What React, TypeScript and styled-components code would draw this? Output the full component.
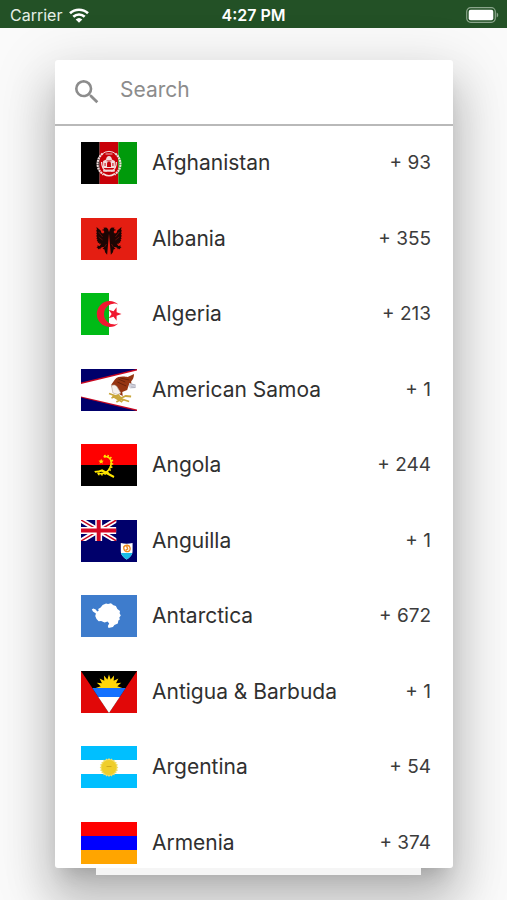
import React, { useState } from 'react';
import styled, { createGlobalStyle } from 'styled-components';
import { MdSearch } from 'react-icons/md';

const GlobalStyle = createGlobalStyle`
  *, *::before, *::after { box-sizing: border-box; }
  body {
    margin: 0;
    background: #fafafa;
    color: #303030;
    font-family: Inter, "Liberation Sans", sans-serif;
  }
`;

const Screen = styled.div`
  display: flex;
  flex-direction: column;
  height: 100vh;
  overflow: hidden;
`;

const StatusBar = styled.header`
  display: grid;
  grid-template-columns: 1fr auto 1fr;
  align-items: center;
  flex: none;
  height: 28px;
  padding: 2px 8px 0;
  background: #235126;
  color: #fff;
  font-size: 16px;
  line-height: 20px;
`;

const Carrier = styled.div`
  display: flex;
  align-items: center;
  gap: 7px;
  padding-left: 2px;
  color: #e6efe6;
`;

const Clock = styled.time`
  font-weight: 600;
`;

const BatteryIcon = styled.svg`
  justify-self: end;
`;

const Backdrop = styled.main`
  display: flex;
  flex: 1;
  flex-direction: column;
  min-height: 0;
  padding: 32px 54px 25px 55px;
`;

const Dialog = styled.section`
  display: flex;
  flex: 1;
  flex-direction: column;
  min-height: 0;
  overflow: hidden;
  border-radius: 3px;
  background: #fff;
  box-shadow:
    0 13px 18px -9px rgba(0, 0, 0, 0.16),
    0 34px 46px 4px rgba(0, 0, 0, 0.17),
    0 16px 56px 10px rgba(0, 0, 0, 0.13);
`;

const Sheet = styled.div`
  position: relative;
  flex: none;
  height: 7px;
  margin: 0 32px 0 41px;
  background: #f5f5f5;
`;

const SearchBar = styled.label`
  display: flex;
  align-items: center;
  flex: none;
  gap: 17px;
  height: 66px;
  padding: 0 16px;
  border-bottom: 2px solid #b9b9b9;
  color: #8c8c8c;
`;

const SearchInput = styled.input`
  flex: 1;
  min-width: 0;
  padding: 0 0 4px;
  border: 0;
  outline: 0;
  background: transparent;
  color: #303030;
  font: inherit;
  font-size: 21px;
  line-height: 26px;
  &::placeholder {
    color: #8c8c8c;
    opacity: 1;
  }
`;

const CountryList = styled.ul`
  display: grid;
  grid-auto-rows: 1fr;
  flex: none;
  height: 755px;
  margin: 0;
  padding: 0;
  list-style: none;
`;

const CountryButton = styled.button`
  display: flex;
  align-items: center;
  width: 100%;
  height: 100%;
  padding: 0 22px 1px 26px;
  border: 0;
  background: transparent;
  color: inherit;
  font: inherit;
  text-align: left;
  cursor: pointer;
`;

const Name = styled.span`
  flex: 1;
  margin-left: 15px;
  font-size: 21px;
  line-height: 26px;
`;

const DialCode = styled.span`
  color: #3c3c3c;
  font-size: 19px;
  line-height: 26px;
`;

const FlagFrame = styled.svg`
  flex: none;
  display: block;
`;

const star = (cx: number, cy: number, outer: number, inner: number, points: number, turn = -90) =>
  Array.from({ length: points * 2 }, (_, i) => {
    const r = i % 2 ? inner : outer;
    const a = ((turn + (i * 180) / points) * Math.PI) / 180;
    return `${(cx + r * Math.cos(a)).toFixed(2)},${(cy + r * Math.sin(a)).toFixed(2)}`;
  }).join(' ');

const Afghanistan = () => (
  <>
    <path d="M0 0h19v42H0z" fill="#000" />
    <path d="M19 0h19v42H19z" fill="#c80008" />
    <path d="M38 0h19v42H38z" fill="#009a0b" />
    <g fill="none" stroke="#f2dede">
      <path d="M22 11.500C15 17 15 28 23 32.500M35 11.500c7 5.500 7 16.500-1 21" strokeWidth="2.200" strokeDasharray="2 .6" />
      <path d="M21 12.500a10.500 10.500 0 0 1 15 0" strokeWidth="1" />
      <path d="M23 32c3.500 2.200 7.500 2.200 11 0" strokeWidth="1.600" />
      <path d="M21 20c0 5 2 8 5 9.500M36 20c0 5-2 8-5 9.500" strokeWidth="1.300" />
    </g>
    <path d="M22.500 26v-7l3-1.500c.2-2 1.300-3.500 3-3.500s2.800 1.500 3 3.500l3 1.500v7z" fill="#f2dede" />
    <path d="M26.500 25v-3.500a2 2 0 0 1 4 0V25zM24 21h1v3h-1zM32 21h1v3h-1zM26 18.500h5v.8h-5z" fill="#c80008" />
    <path d="M23 28h11v1.300H23zM25 12h7" fill="#f2dede" stroke="#f2dede" strokeWidth=".8" />
  </>
);

const eagleHalf =
  'M28.600 14.500 27.500 11l-1.800-1.500-3 .3 1 1.200-2.700 1 2.400.8.300 1.400-1.200 1.300-1.600-.5L20 12.500 15.800 9l.4 3-.8.500.9 2-.9.600.9 1.900-.9.700 1 1.800-.8.800 1.200 1.500-.8.900 1.500 1.200-.6 1 2-.1-.5 1.500 2.200-.8-1.600 2.600-2.400-.7.300 1.500-1.300.9 1.500.3.200 1.500 1.300-1 .8 1 .8-1.900 2.200-.8 1.200.6-1.700 1.200 2 .9.600 2.600 2.100 2.500z';

const Albania = () => (
  <>
    <path d="M0 0h57v42H0z" fill="#e41e12" />
    <g fill="#1c0503">
      <path d={eagleHalf} />
      <path d={eagleHalf} transform="matrix(-1 0 0 1 57 0)" />
    </g>
    <path d="m18 14 4 5m-4 0 4 3m17-8-4 5m4 0-4 3m-9 4-2 3m7-3 2 3" stroke="#8c120b" strokeWidth=".6" />
  </>
);

const Algeria = () => (
  <>
    <path d="M0 0h57v42H0z" fill="#fff" />
    <path d="M0 0h28.500v42H0z" fill="#00bb16" />
    <path d="M38 11.500A13 13 0 1 0 38 30.500 10.400 10.400 0 1 1 38 11.500z" fill="#f0182f" />
    <polygon points={star(34, 21, 7.2, 2.8, 5, 0)} fill="#f0182f" />
  </>
);

const AmericanSamoa = () => (
  <>
    <path d="M0 0h57v42H0z" fill="#00006b" />
    <path d="M57 0 0 13.500V28.500L57 42z" fill="#c80720" />
    <path d="M57 1.500 0 15v12.500L57 40.500z" fill="#fff" />
    <path d="M34.500 10.500c3-4 10.500-3 13-2.500l6.500-3c-.2 4-1.200 5.500-3 7.500l.5 3-3 1-1.500 4.500-5 2 .5 4-3-1.500-5-8-3 1-.6-3z" fill="#963512" />
    <path d="m38 10 7 3m-8 0 9 4m-6-8 9 2" stroke="#5e1c08" strokeWidth=".8" />
    <path d="M31 16.500c2-1 4.500-.5 5.500 1l4 6.500-3 1.500-5-1.500z" fill="#f6f1ed" stroke="#bba698" strokeWidth=".6" />
    <path d="m49 14 7 1.500v3.500l-6 .5-1.500-2z" fill="#d2d2dc" />
    <path d="m51 15 4 1m-4 2 4 .5" stroke="#9999a8" strokeWidth=".6" />
    <path d="m28.500 24.500 7 2.500 4 2.500 6-2.500 5.500.5M31 29l7-3 5 6M36 33l5-3 8 2.500M32 27l10 6" fill="none" stroke="#caa73c" strokeWidth="1.800" />
  </>
);

const Angola = () => (
  <>
    <path d="M0 0h57v21H0z" fill="#f00" />
    <path d="M0 21h57v21H0z" fill="#000" />
    <path d="M23 12.800c6-1.500 9 3.500 7.200 9.200-2 6.500-8.500 9-13.500 7" fill="none" stroke="#ffe500" strokeWidth="1.600" />
    <path d="M23.500 12.300c7-1.500 9 4.500 7.500 9.700-2.200 7-9 9.500-14 7.500" fill="none" stroke="#ffe500" strokeWidth="2.800" strokeDasharray="1.500 1.600" />
    <path d="m13.500 27 4.500-.5 3.500-1.200L34 32l-.8 2L21 27.800l-6.500 1z" fill="#ffe500" />
    <polygon points={star(20.5, 17.5, 2.8, 1.3, 5)} fill="#ffe500" />
  </>
);

const Anguilla = () => (
  <>
    <path d="M0 0h57v42H0z" fill="#00006b" />
    <svg width="36" height="21" viewBox="0 0 36 21">
      <path d="m0 0 36 21M36 0 0 21" stroke="#fff" strokeWidth="5" />
      <path d="m0 0 36 21M36 0 0 21" stroke="#c80720" strokeWidth="1.500" />
      <path d="M18 0v21M0 10.500h36" stroke="#fff" strokeWidth="7" />
      <path d="M18 0v21M0 10.500h36" stroke="#d40724" strokeWidth="4" />
    </svg>
    <path d="M40.500 23c4 1 8 1 12 0v8c0 4-3 6.500-6 8.500-3-2-6-4.500-6-8.500z" fill="#fff" />
    <path d="M40.700 33h11.600c-.8 2.800-3 4.800-5.800 6.500-2.800-1.700-5-3.700-5.800-6.500z" fill="#18bce8" />
    <path d="M43.500 27c2-3 6-2 6.500 1s-2 4-4 3.500-2.500-2.500-2.500-4.500zm3-1 1 3-2 1" fill="none" stroke="#ef8a1e" strokeWidth="1.400" />
  </>
);

const Antarctica = () => (
  <>
    <path d="M0 0h57v42H0z" fill="#3e7ccc" />
    <path
      d="m12.500 13.500 2.500 1 1.500 2 1.500-.7-.5-1.800 2.500-1.500 2-2.500 3.500-1.500 2 .6 3-.8 2.500 2 2.500.8 1.500 3 2.700 2-.4 2.200 1.200 2.200-1.500 2 .5 2-1.500 1-.5 3-3.500 1.500-1.500 2-4.500 1-.7-2 1.400-2.500-1.700-2-3 1-3.500-1.500-2.500.2-2.200-2.200-1.300-3 .7-2.500-3-2-1.200-2z"
      fill="#fff"
    />
  </>
);

const AntiguaBarbuda = () => (
  <>
    <path d="M0 0h57v42H0z" fill="#e10808" />
    <path d="M0 0h57L28.500 42z" fill="#000" />
    <path d="M11.500 17h34l-6.100 9H17.600z" fill="#1471ff" />
    <path d="M17.600 26h21.800L28.500 42z" fill="#fff" />
    <svg width="57" height="17" viewBox="0 0 57 17">
      <polygon points={star(28.5, 17, 13.5, 8.6, 16)} fill="#ffd60a" />
    </svg>
  </>
);

const Argentina = () => (
  <>
    <path d="M0 0h57v42H0z" fill="#fff" />
    <path d="M0 0h57v14H0zM0 28h57v14H0z" fill="#00bfff" />
    <polygon points={star(28.5, 21.5, 9.5, 8.2, 20)} fill="#f0dc68" />
    <circle cx="28.500" cy="21.500" r="7.500" fill="#efce2c" />
    <path d="M26 20.500h5" stroke="#c7a014" strokeWidth=".8" />
  </>
);

const Armenia = () => (
  <>
    <path d="M0 0h57v14H0z" fill="#f00" />
    <path d="M0 14h57v14H0z" fill="#00f" />
    <path d="M0 28h57v14H0z" fill="#ffa500" />
  </>
);

const countries = [
  { name: 'Afghanistan', code: '93', Flag: Afghanistan },
  { name: 'Albania', code: '355', Flag: Albania },
  { name: 'Algeria', code: '213', Flag: Algeria },
  { name: 'American Samoa', code: '1', Flag: AmericanSamoa },
  { name: 'Angola', code: '244', Flag: Angola },
  { name: 'Anguilla', code: '1', Flag: Anguilla },
  { name: 'Antarctica', code: '672', Flag: Antarctica },
  { name: 'Antigua & Barbuda', code: '1', Flag: AntiguaBarbuda },
  { name: 'Argentina', code: '54', Flag: Argentina },
  { name: 'Armenia', code: '374', Flag: Armenia },
];

export default function App() {
  const [query, setQuery] = useState('');
  return (
    <>
      <GlobalStyle />
      <Screen>
        <StatusBar>
          <Carrier>
            <span>Carrier</span>
            <svg width="20" height="15" viewBox="0 0 20 15" aria-hidden="true">
              <g fill="none" stroke="#fff" strokeWidth="2.600">
                <path d="M1 5.300a13 13 0 0 1 18 0" />
                <path d="M4.300 8.800a8.200 8.200 0 0 1 11.400 0" />
              </g>
              <path d="m10 14.800-3.300-3.300a4.800 4.800 0 0 1 6.600 0z" fill="#fff" />
            </svg>
          </Carrier>
          <Clock>4:27 PM</Clock>
          <BatteryIcon width="33" height="16" viewBox="0 0 33 16" aria-hidden="true">
            <rect x=".7" y=".7" width="28.600" height="14.600" rx="4" fill="none" stroke="#8ba68c" strokeWidth="1.200" />
            <rect x="2.700" y="2.700" width="24.600" height="10.600" rx="2" fill="#fff" />
            <path d="M30.700 5.500c2 .8 2 4.200 0 5z" fill="#8ba68c" />
          </BatteryIcon>
        </StatusBar>
        <Backdrop>
          <Dialog aria-label="Country">
            <SearchBar>
              <MdSearch size={32} aria-hidden="true" />
              <SearchInput
                type="text"
                placeholder="Search"
                aria-label="Search"
                value={query}
                onChange={(event) => setQuery(event.target.value)}
              />
            </SearchBar>
            <CountryList>
              {countries
                .filter(({ name }) => name.toLowerCase().includes(query.toLowerCase()))
                .map(({ name, code, Flag }) => (
                  <li key={name}>
                    <CountryButton type="button">
                      <FlagFrame width="56" height="42" viewBox="0 0 57 42" preserveAspectRatio="none" aria-hidden="true">
                        <Flag />
                      </FlagFrame>
                      <Name>{name}</Name>
                      <DialCode>+ {code}</DialCode>
                    </CountryButton>
                  </li>
                ))}
            </CountryList>
          </Dialog>
          <Sheet />
        </Backdrop>
      </Screen>
    </>
  );
}
